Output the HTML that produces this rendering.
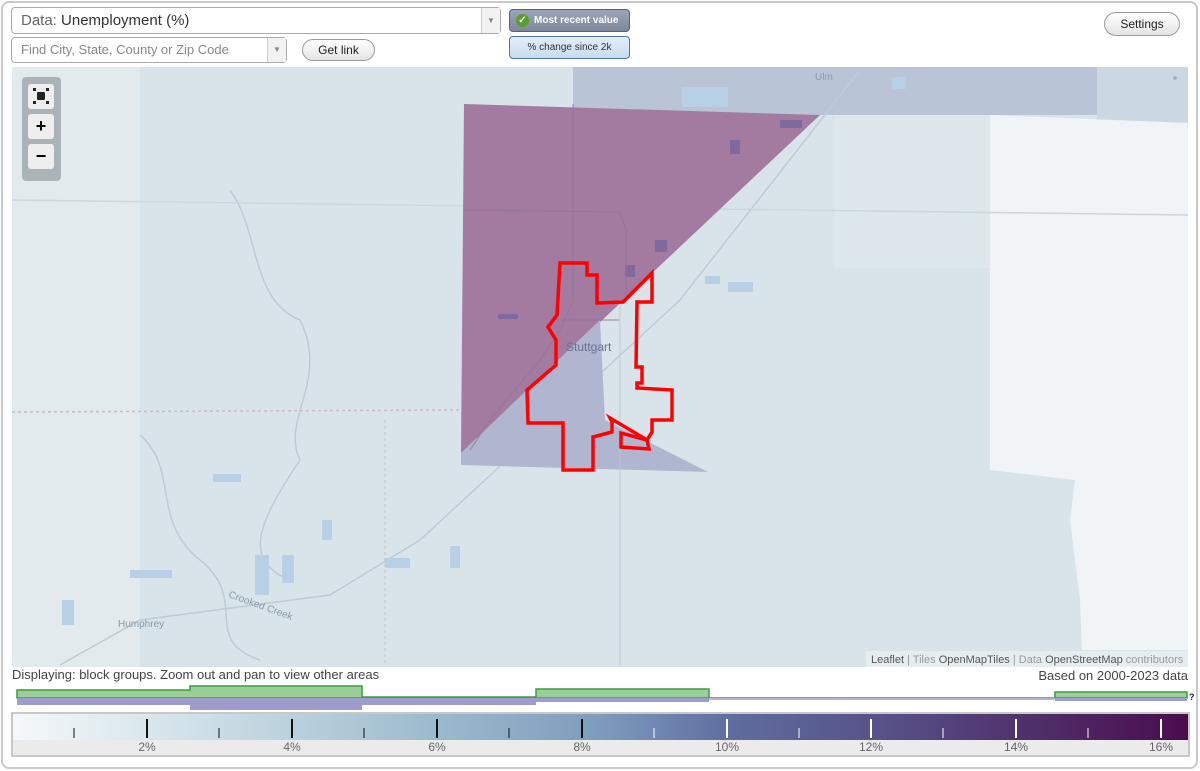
<!DOCTYPE html>
<html><head><meta charset="utf-8"><style>
*{box-sizing:border-box;margin:0;padding:0}
body{width:1200px;height:771px;background:#fff;font-family:"Liberation Sans",Arial,sans-serif;position:relative;overflow:hidden}
.frame{position:absolute;left:1px;top:1px;width:1197px;height:768px;border:2px solid #c9c9c9;border-radius:8px}
.sel{position:absolute;background:#fff;border:1px solid #aaa;border-radius:4px;color:#555}
.arr{position:absolute;right:0;top:0;bottom:0;width:19px;border-left:1px solid #ccc;background:#f2f2f2;color:#888;font-size:8px;text-align:center}
.btn{position:absolute;border:1px solid #999;border-radius:12px;background:linear-gradient(#fff,#e4e4e4);font-size:12px;color:#222;text-align:center}
</style></head><body>
<div class="frame"></div>
<div class="sel" style="left:11px;top:7px;width:490px;height:27px;font-size:15px;line-height:25px;padding-left:9px"><span style="color:#666">Data:</span> <span style="color:#333">Unemployment (%)</span><div class="arr" style="line-height:25px">▼</div></div>
<div class="sel" style="left:11px;top:37px;width:276px;height:26px;font-size:13px;line-height:24px;padding-left:9px;color:#888">Find City, State, County or Zip Code<div class="arr" style="line-height:24px">▼</div></div>
<div class="btn" style="left:302px;top:39px;width:73px;height:22px;line-height:20px">Get link</div>
<div style="position:absolute;left:509px;top:9px;width:121px;height:23px;border:1px solid #4b6584;border-radius:4px;background:linear-gradient(#9aa5b8,#7d889c);color:#fff;font-size:10px;font-weight:bold;line-height:21px;padding-left:24px">Most recent value
<span style="position:absolute;left:6px;top:4px;width:13px;height:13px;border-radius:50%;background:#5a9e2f;color:#fff;font-size:10px;line-height:13px;text-align:center">✓</span></div>
<div style="position:absolute;left:509px;top:36px;width:121px;height:23px;border:1px solid #4b74a8;border-radius:4px;background:linear-gradient(#e4eefa,#c8dbf0);color:#333;font-size:10px;line-height:21px;text-align:center">% change since 2k</div>
<div class="btn" style="left:1104px;top:12px;width:76px;height:24px;line-height:22px">Settings</div>

<svg style="position:absolute;left:12px;top:67px" width="1176" height="600" viewBox="12 67 1176 600">
<rect x="12" y="67" width="1176" height="600" fill="#d9e4ea"/>
<rect x="12" y="67" width="128" height="600" fill="#e2eaee"/>
<rect x="573" y="67" width="524" height="48" fill="#b9c4d6"/>
<rect x="1097" y="67" width="91" height="56" fill="#cbd8e4"/>
<polygon points="990,115 1188,123 1188,650 1082,650 1080,600 1070,520 1075,480 990,470" fill="#f0f4f6"/>
<rect x="835" y="115" width="155" height="153" fill="#dde7ec"/>
<g fill="none" stroke="#bfcbd4" stroke-width="1.5">
<path d="M60,665 L140,620 L330,595 L420,540 L680,300 L860,70"/>
<path d="M230,190 C260,230 250,300 300,320 C330,380 280,420 300,460 C260,520 240,560 290,580"/>
<path d="M140,435 C180,470 150,520 200,560 C250,600 200,640 260,660"/>
<path d="M12,200 L1188,215" stroke="#ccd6dd"/>
<path d="M12,412 L460,410" stroke="#d0b8c4" stroke-dasharray="3,3"/>
<path d="M385,420 L385,665" stroke="#ccc" stroke-dasharray="3,3"/>
</g>
<g fill="#b7d0e6">
<rect x="682" y="87" width="46" height="20"/><rect x="892" y="77" width="14" height="12"/>
<rect x="213" y="474" width="28" height="8"/><rect x="130" y="570" width="42" height="8"/>
<rect x="255" y="555" width="14" height="40"/><rect x="282" y="555" width="12" height="28"/>
<rect x="322" y="520" width="10" height="20"/><rect x="385" y="558" width="25" height="10"/>
<rect x="450" y="546" width="10" height="22"/><rect x="62" y="600" width="12" height="25"/>
<rect x="705" y="276" width="15" height="8"/><rect x="728" y="282" width="25" height="10"/>
</g>
<polygon points="464,104 820,115 461,453" fill="#a47ba0"/>
<polygon points="461,453 600,320 605,420 708,472 461,465" fill="#b1b6d0"/>
<g fill="#7e6a9e"><rect x="655" y="240" width="12" height="12"/><rect x="625" y="265" width="10" height="12"/><rect x="498" y="314" width="20" height="5"/><rect x="730" y="140" width="10" height="14"/><rect x="780" y="120" width="22" height="8"/></g>
<g fill="none" stroke="#8e7896" stroke-width="1.2" opacity=".7">
<path d="M573,104 L573,300 L560,330 L540,360 L490,420 L470,450"/><path d="M465,210 L620,212 L626,230 L626,300"/><path d="M560,320 L620,320"/><path d="M620,300 L620,665" stroke="#bbc6d0"/>
</g>
<text x="566" y="351" font-size="12" fill="#6b6f94" font-family="Liberation Sans,sans-serif">Stuttgart</text>
<text x="118" y="627" font-size="10" fill="#8a9aa8" font-family="Liberation Sans,sans-serif">Humphrey</text>
<text x="228" y="597" font-size="10" fill="#8a9aa8" transform="rotate(20 228 597)" font-family="Liberation Sans,sans-serif">Crooked Creek</text>
<text x="815" y="80" font-size="10" fill="#8a9aa8" font-family="Liberation Sans,sans-serif">Ulm</text>
<circle cx="1175" cy="78" r="1.8" fill="#a0acb8"/>
<path d="M560,263 L587,263 L587,275 L597,275 L597,303 L623,302 L652,273 L652,302 L637,302 L636,367 L642,367 L642,383 L637,383 L637,388 L672,390 L672,420 L652,420 L652,432 L647,440 L649,449 L621,447 L621,433 L647,440 L610,418 L612,422 L612,432 L593,437 L593,470 L563,470 L563,423 L528,423 L527,390 L556,365 L556,340 L548,327 L557,315 Z" fill="none" stroke="#ff0000" stroke-width="3.5" stroke-linejoin="miter"/>
<rect x="866" y="651" width="322" height="16" fill="#e8eef2" opacity=".85"/>
<text x="871" y="663" font-size="11" fill="#999" font-family="Liberation Sans,sans-serif"><tspan fill="#555">Leaflet</tspan> | Tiles <tspan fill="#555">OpenMapTiles</tspan> | Data <tspan fill="#555">OpenStreetMap</tspan> contributors</text>
</svg>
<div style="position:absolute;left:22px;top:77px;width:39px;height:104px;background:#aab3b7;border-radius:4px"></div>
<div style="position:absolute;left:28px;top:84px;width:26px;height:25px;background:#eee;border-radius:3px">
<svg width="26" height="25" style="position:absolute;left:0;top:0"><rect x="9" y="8" width="8" height="8" rx="1" fill="#222"/><g fill="#222"><rect x="5" y="4" width="3" height="3"/><rect x="18" y="4" width="3" height="3"/><rect x="5" y="17" width="3" height="3"/><rect x="18" y="17" width="3" height="3"/></g></svg></div>
<div style="position:absolute;left:28px;top:114px;width:26px;height:25px;background:#eee;border-radius:3px;font:bold 18px/25px 'Liberation Sans';text-align:center">+</div>
<div style="position:absolute;left:28px;top:144px;width:26px;height:25px;background:#eee;border-radius:3px;font:bold 18px/24px 'Liberation Sans';text-align:center">−</div>

<div style="position:absolute;left:12px;top:667px;font-size:13px;color:#444">Displaying: block groups. Zoom out and pan to view other areas</div>
<div style="position:absolute;right:12px;top:668px;font-size:13px;color:#444">Based on 2000-2023 data</div>
<svg style="position:absolute;left:0;top:680px" width="1200" height="34">
<path d="M17,18 L17,10 L190,10 L190,6 L362,6 L362,17 L536,17 L536,9 L709,9 L709,18 L1055,18 L1055,12 L1187,12 L1187,18 Z" fill="#9bcf98" stroke="#3f9a42" stroke-width="1.5"/>
<rect x="17" y="18" width="519" height="7" fill="#9d9ccc"/><rect x="190" y="18" width="172" height="12" fill="#9d9ccc"/><rect x="536" y="18" width="173" height="4" fill="#9d9ccc"/><rect x="709" y="18" width="346" height="2" fill="#b5b4d8"/><rect x="1055" y="18" width="132" height="3" fill="#9d9ccc"/>
<text x="1189" y="20" font-size="9" font-weight="bold" fill="#222">?</text>
</svg>
<div style="position:absolute;left:11px;top:712px;width:1179px;height:45px;border:2px solid #c8c8c8;background:#ebebeb"></div>
<div style="position:absolute;left:13px;top:714px;width:1175px;height:26px;background:linear-gradient(90deg,#f4f8fa 0%,#d8e6ec 12%,#b7cfdb 25%,#97b6cb 38%,#7e9bbd 50%,#5f6d9f 61%,#564f86 75%,#4f2c66 88%,#4a0c4e 100%)"></div>
<svg style="position:absolute;left:0;top:714px" width="1200" height="42">
<g stroke="#111" stroke-width="2"><path d="M147,5 V24 M292,5 V24 M437,5 V24 M582,5 V24"/></g>
<g stroke="#111" stroke-width="1"><path d="M74,14 V24 M219,14 V24 M364,14 V24 M509,14 V24"/></g>
<g stroke="#fff" stroke-width="2"><path d="M727,5 V24 M871,5 V24 M1016,5 V24 M1161,5 V24"/></g>
<g stroke="#fff" stroke-width="1"><path d="M654,14 V24 M799,14 V24 M943,14 V24 M1088,14 V24"/></g>
<g font-size="12" fill="#666" text-anchor="middle" font-family="Liberation Sans,sans-serif"><text x="147" y="37">2%</text><text x="292" y="37">4%</text><text x="437" y="37">6%</text><text x="582" y="37">8%</text><text x="727" y="37">10%</text><text x="871" y="37">12%</text><text x="1016" y="37">14%</text><text x="1161" y="37">16%</text></g>
</svg>
</body></html>
